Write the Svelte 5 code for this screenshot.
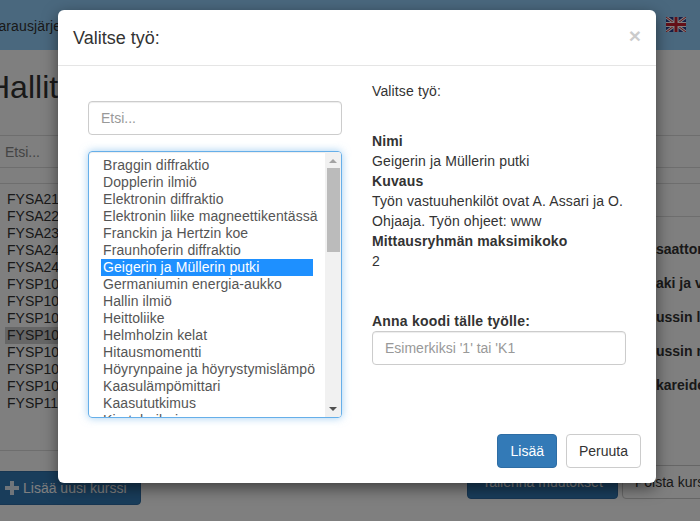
<script>
	const courses = [
		'FYSA2110', 'FYSA2201', 'FYSA2301', 'FYSA2401', 'FYSA2402',
		'FYSP1010', 'FYSP1020', 'FYSP1030', 'FYSP1040', 'FYSP1050',
		'FYSP1060', 'FYSP1070', 'FYSP1100'
	];
	const selectedCourse = 8;
	const labs = ['saattori', 'aki ja vastus', 'ussin lähde', 'ussin malli', 'kareiden'];
	const works = [
		'Braggin diffraktio', 'Dopplerin ilmiö', 'Elektronin diffraktio',
		'Elektronin liike magneettikentässä', 'Franckin ja Hertzin koe', 'Fraunhoferin diffraktio',
		'Geigerin ja Müllerin putki', 'Germaniumin energia-aukko', 'Hallin ilmiö', 'Heittoliike',
		'Helmholzin kelat', 'Hitausmomentti', 'Höyrynpaine ja höyrystymislämpö',
		'Kaasulämpömittari', 'Kaasututkimus', 'Kiertoheiluri'
	];
	const selectedWork = 6;
</script>

<div class="screen">
	<!-- sivu taustalla -->
	<div class="page">
		<nav class="navbar">
			<span class="brand">Varausjärjestelmä</span>
			<svg class="flag" width="20" height="15" viewBox="0 0 20 15">
				<rect width="20" height="15" fill="#2a3f8f" />
				<path d="M0 0L20 15M20 0L0 15" stroke="#fff" stroke-width="3" />
				<path d="M0 0L20 15M20 0L0 15" stroke="#c8202f" stroke-width="1" />
				<path d="M10 0V15M0 7.5H20" stroke="#fff" stroke-width="5" />
				<path d="M10 0V15M0 7.5H20" stroke="#c8202f" stroke-width="3" />
			</svg>
		</nav>
		<h1 class="page-title">Hallitse kursseja</h1>
		<div class="toolbar">Etsi...</div>
		<div class="columns">
			<div class="col-left">
				<ul class="course-list">
					{#each courses as course, i}
						<li class:active={i === selectedCourse}>{course}</li>
					{/each}
				</ul>
				<button class="btn btn-primary add-course">
					<svg class="plus" width="14" height="14" viewBox="0 0 14 14"><path d="M5 0H9V5H14V9H9V14H5V9H0V5H5Z" fill="#fff" /></svg>
					Lisää uusi kurssi
				</button>
			</div>
			<div class="col-right">
				<div class="lab-head"></div>
				<ul class="lab-list">
					{#each labs as lab}
						<li>{lab}</li>
					{/each}
				</ul>
				<div class="page-actions">
					<button class="btn btn-primary save">Tallenna muutokset</button>
					<button class="btn btn-default remove">Poista kurssi</button>
				</div>
			</div>
		</div>
	</div>

	<!-- modaali -->
	<div class="backdrop">
		<div class="modal">
			<header class="modal-header">
				<h4>Valitse työ:</h4>
				<span class="close">×</span>
			</header>
			<div class="modal-body">
				<div class="picker">
					<input class="form-control" placeholder="Etsi..." />
					<div class="listbox">
						<ul class="options">
							{#each works as work, i}
								<li class:selected={i === selectedWork}>{work}</li>
							{/each}
						</ul>
						<div class="scrollbar">
							<span class="arrow up"></span>
							<span class="thumb"></span>
							<span class="arrow down"></span>
						</div>
					</div>
				</div>
				<div class="details">
					<p class="intro">Valitse työ:</p>
					<dl>
						<dt>Nimi</dt>
						<dd>Geigerin ja Müllerin putki</dd>
						<dt>Kuvaus</dt>
						<dd>Työn vastuuhenkilöt ovat A. Assari ja O. Ohjaaja. Työn ohjeet: www</dd>
						<dt>Mittausryhmän maksimikoko</dt>
						<dd>2</dd>
					</dl>
					<label for="koodi">Anna koodi tälle työlle:</label>
					<input id="koodi" class="form-control" placeholder="Esimerkiksi '1' tai 'K1" />
				</div>
			</div>
			<footer class="modal-footer">
				<button class="btn btn-primary">Lisää</button>
				<button class="btn btn-default">Peruuta</button>
			</footer>
		</div>
	</div>
</div>

<style>
	:global(body) {
		font-family: "Liberation Sans", Arial, sans-serif;
		font-size: 14px;
		color: #333;
	}
	ul {
		list-style: none;
		margin: 0;
		padding: 0;
	}

	.screen {
		position: relative;
		width: 700px;
		height: 521px;
		overflow: hidden;
		background: #fff;
	}

	/* --- napit ja kentät --- */
	.btn {
		height: 34px;
		padding: 6px 12px;
		font: inherit;
		line-height: 20px;
		border: 1px solid transparent;
		border-radius: 4px;
		box-sizing: border-box;
	}
	.btn-primary {
		color: #fff;
		background: #337ab7;
		border-color: #2e6da4;
	}
	.btn-default {
		color: #333;
		background: #fff;
		border-color: #ccc;
	}
	.form-control {
		display: block;
		width: 100%;
		height: 34px;
		padding: 6px 12px;
		box-sizing: border-box;
		font: inherit;
		color: #555;
		background: #fff;
		border: 1px solid #ccc;
		border-radius: 4px;
		box-shadow: inset 0 1px 1px rgba(0, 0, 0, 0.075);
		outline: none;
	}
	.form-control::placeholder {
		color: #999;
		opacity: 1;
	}

	/* --- sivu --- */
	.navbar {
		display: flex;
		align-items: center;
		justify-content: space-between;
		height: 50px;
		padding: 2px 14px 0 0;
		box-sizing: border-box;
		background: #95d1fd;
	}
	.brand {
		margin-left: -10px;
		color: #333;
		letter-spacing: 0.12px;
	}
	.flag {
		margin-top: -3px;
	}
	.page-title {
		margin: 0 0 0 -13px;
		height: 85px;
		box-sizing: border-box;
		padding: 17px 0 0;
		font-size: 32px;
		line-height: 40px;
		font-weight: 400;
	}
	.toolbar {
		height: 33px;
		line-height: 33px;
		padding-left: 5px;
		color: #888;
		border-top: 1px solid #ddd;
		border-bottom: 1px solid #ddd;
		box-sizing: border-box;
	}
	.columns {
		display: grid;
		grid-template-columns: 400px 300px;
		margin-top: 15px;
	}
	.course-list {
		height: 268px;
		box-sizing: border-box;
		padding-top: 7px;
		border-top: 1px solid #ddd;
		border-bottom: 1px solid #ddd;
	}
	.course-list li {
		height: 17px;
		line-height: 17px;
		padding-left: 7px;
	}
	.course-list .active {
		margin-left: 5px;
		padding-left: 2px;
		background: #ccc;
	}
	.add-course {
		display: flex;
		align-items: center;
		gap: 4px;
		margin: 20px 0 0 -20px;
		width: 161px;
		padding-left: 24px;
		white-space: nowrap;
	}
	.plus {
		flex: none;
		opacity: 0.85;
	}
	.lab-head {
		height: 34px;
		border-top: 1px solid #ddd;
		border-bottom: 1px solid #ddd;
		box-sizing: border-box;
	}
	.lab-list {
		display: flex;
		flex-direction: column;
		gap: 17px;
		padding: 24px 0 0 256px;
		font-weight: 700;
		white-space: nowrap;
	}
	.lab-list li {
		line-height: 17px;
		height: 17px;
	}
	.page-actions {
		display: flex;
		gap: 4px;
		margin-top: 71px;
		padding-left: 67px;
		white-space: nowrap;
	}
	.save {
		flex: none;
		width: 151px;
	}
	.remove {
		flex: none;
	}

	/* --- modaali --- */
	.backdrop {
		position: absolute;
		inset: 0;
		padding: 10px 0 0 58px;
		background: rgba(0, 0, 0, 0.5);
	}
	.modal {
		width: 598px;
		background: #fff;
		border-radius: 6px;
		box-shadow: 0 5px 15px rgba(0, 0, 0, 0.5);
	}
	.modal-header {
		display: flex;
		justify-content: space-between;
		align-items: center;
		height: 56px;
		padding: 0 15px;
		box-sizing: border-box;
		border-bottom: 1px solid #e5e5e5;
	}
	.modal-header h4 {
		margin: 0;
		font-size: 18px;
		font-weight: 500;
		line-height: 20px;
	}
	.close {
		font-size: 21px;
		font-weight: 700;
		line-height: 1;
		color: #000;
		opacity: 0.2;
		margin-top: -4px;
	}
	.modal-body {
		display: grid;
		grid-template-columns: minmax(0, 1fr) minmax(0, 1fr);
		padding: 15px;
	}
	.picker {
		padding: 20px 15px 0;
		display: flex;
		flex-direction: column;
		gap: 16px;
	}
	.listbox {
		display: flex;
		height: 267px;
		box-sizing: border-box;
		overflow: hidden;
		color: #555;
		border: 1px solid #66afe9;
		border-radius: 4px;
		box-shadow: inset 0 1px 1px rgba(0, 0, 0, 0.075), 0 0 8px rgba(102, 175, 233, 0.6);
	}
	.options {
		flex: 1;
		min-width: 0;
		padding: 5px 12px;
		letter-spacing: 0.09px;
	}
	.options li {
		height: 17px;
		line-height: 17px;
		padding-left: 2px;
		white-space: nowrap;
	}
	.options .selected {
		color: #fff;
		background: #1e90ff;
	}
	.scrollbar {
		flex: none;
		display: flex;
		flex-direction: column;
		align-items: center;
		width: 16px;
		background: #f1f1f1;
	}
	.thumb {
		width: 13px;
		height: 84px;
		background: #bbb;
	}
	.arrow {
		width: 0;
		height: 0;
		border-left: 4px solid transparent;
		border-right: 4px solid transparent;
	}
	.up {
		margin: 7px 0 5px;
		border-bottom: 4px solid #a3a3a3;
	}
	.down {
		margin-top: auto;
		margin-bottom: 6px;
		border-top: 4px solid #505050;
	}
	.details {
		padding: 0 15px;
		line-height: 20px;
		letter-spacing: 0.13px;
	}
	.intro {
		margin: 0 0 30px;
	}
	dl {
		margin: 0 0 40px;
	}
	dt {
		font-weight: 700;
	}
	dd {
		margin: 0;
	}
	label {
		display: block;
		font-weight: 700;
		letter-spacing: 0.2px;
	}
	.modal-footer {
		display: flex;
		justify-content: flex-end;
		gap: 9px;
		padding: 1px 15px 15px;
		letter-spacing: 0.25px;
	}
</style>
